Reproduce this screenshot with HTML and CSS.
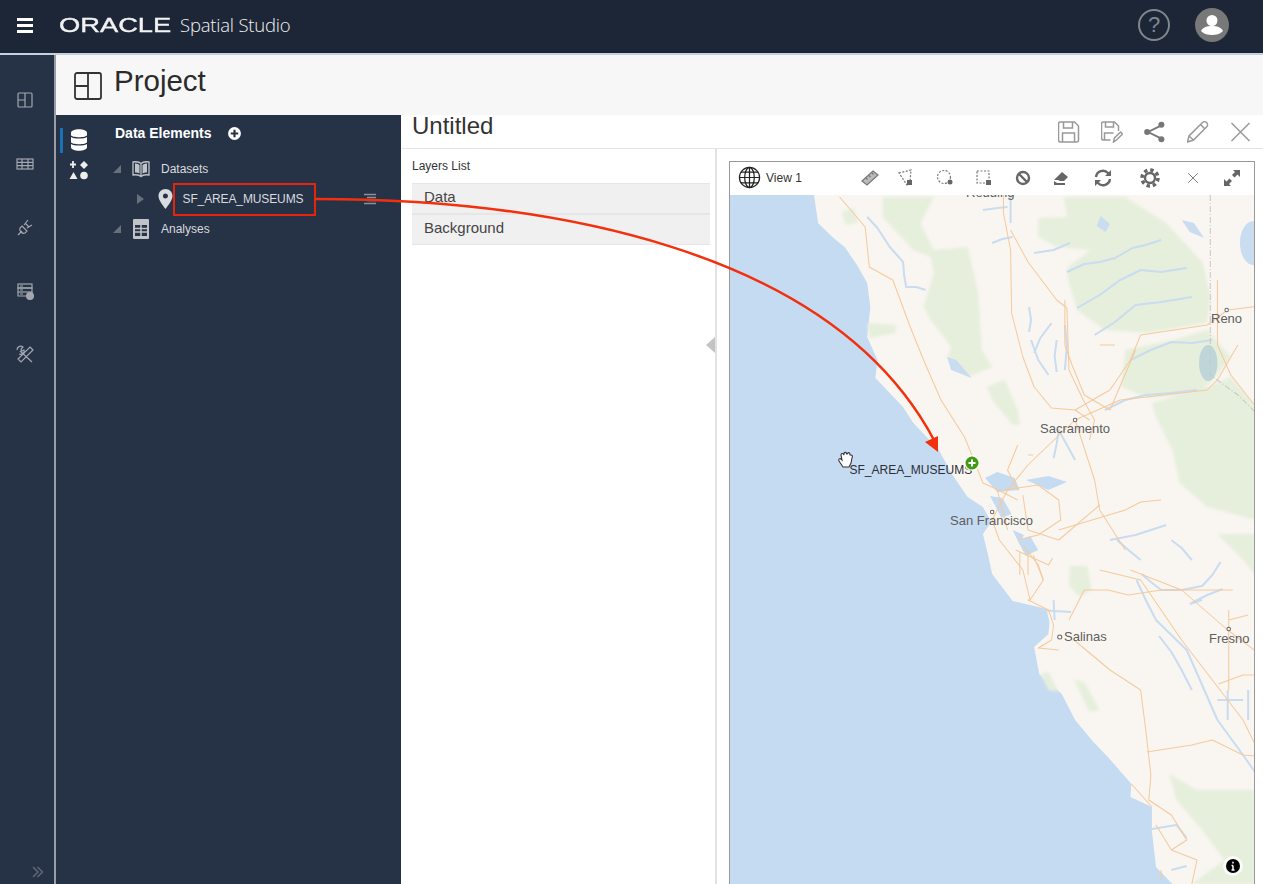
FILE: index.html
```html
<!DOCTYPE html>
<html lang="en">
<head>
    <meta charset="UTF-8">
    <title>Oracle Spatial Studio</title>
    <link rel="stylesheet" href="styles.css">
</head>
<body>

<header class="topbar">
    <div class="hamburger"><span></span><span></span><span></span></div>
    <div class="brand">
        <span class="brand-oracle">ORACLE</span>
        <span class="brand-product">Spatial Studio</span>
    </div>
    <div class="help">?</div>
    <svg class="avatar" viewBox="0 0 34 34">
        <circle class="avatar-bg" cx="17" cy="17" r="17"/>
        <circle class="avatar-fg" cx="17" cy="12.500" r="5.500"/>
        <path class="avatar-fg" d="M6 23c2-4 6-5 11-5s9 1 11 5c-3 3-7 4-11 4s-8-1-11-4z"/>
    </svg>
</header>

<div class="shell">
    <nav class="rail">
        <svg class="rail-icon" viewBox="0 0 20 20"><rect x="3" y="3" width="14" height="14" rx="1"/><path d="M10 3v14M3 10h7"/></svg>
        <svg class="rail-icon" viewBox="0 0 20 20"><rect x="2" y="5" width="16" height="10"/><path d="M2 8.300h16M2 11.600h16M7 5v10M13 5v10"/></svg>
        <svg class="rail-icon" viewBox="0 0 20 20"><path d="M3 18l4-4M7 9l5 5-2 2c-2 1-3 0-4-1s-2-2-1-4zM10 6l4 4M9 8l4-5M12 11l5-3"/></svg>
        <svg class="rail-icon" viewBox="0 0 20 20"><rect x="3" y="3" width="14" height="4"/><rect x="3" y="7" width="14" height="4"/><path d="M3 11v4h8M17 11v1M5 5h3M5 9h3M5 13h3"/><circle class="rail-fill" cx="15" cy="15" r="3.400"/></svg>
        <svg class="rail-icon rail-icon-tools" viewBox="0 0 20 20"><path d="M5 7l12 11M15 3l3 3-12 12-3-3zM2 6c0-3 3-5 6-3L6 5l1 2 2-1c1 3-2 5-5 4"/></svg>
        <svg class="rail-more" viewBox="0 0 12 12"><path d="M1 1l5 5-5 5M5.500 1l5 5-5 5"/></svg>
    </nav>

    <main class="workspace">
        <div class="project-bar">
            <svg class="project-icon" viewBox="0 0 28 28"><rect x="1" y="1" width="26" height="26" rx="2"/><path d="M14 1v26M1 14h13"/></svg>
            <h1 class="project-title">Project</h1>
        </div>

        <div class="columns">
            <section class="panel">
                <div class="panel-tabs">
                    <svg class="tab-db" viewBox="0 0 16 22"><path d="M0 4c0-5 16-5 16 0v2c0 3-16 3-16 0zM0 8c3 2 13 2 16 0v5c0 3-16 3-16 0zM0 15c3 2 13 2 16 0v3c0 5-16 5-16 0z"/></svg>
                    <svg class="tab-tools" viewBox="0 0 20 20"><path d="M4 1v7M1 4.500h6"/><path class="tab-solid" d="M15 1l4 4-4 4-4-4zM4.500 12l4 7h-8z"/><circle class="tab-solid" cx="15" cy="15.500" r="3.800"/></svg>
                </div>
                <div class="tree">
                    <div class="tree-head">
                        <span>Data Elements</span>
                        <svg class="add-icon" viewBox="0 0 14 14"><circle cx="7" cy="7" r="7"/><path d="M7 3.500v7M3.500 7h7"/></svg>
                    </div>
                    <div class="tree-row">
                        <span class="caret-open"></span>
                        <svg class="tree-icon" viewBox="0 0 18 18"><path d="M9 3.500C7 1.500 4 1.500 1 2v13c3-.5 6-.5 8 1.500 2-2 5-2 8-1.500V2C14 1.500 11 1.500 9 3.500zM9 3.500v13"/><path class="tree-solid" d="M3 3.500c2 0 3 .5 4.500 1.500v8.500C6 12.500 5 12.500 3 12.500zM15 3.500c-2 0-3 .5-4.500 1.500v8.500c1.500-1 2.500-1 4.500-1z"/></svg>
                        <span class="tree-label">Datasets</span>
                    </div>
                    <div class="tree-row tree-row-child">
                        <span class="caret-closed"></span>
                        <svg class="pin-icon" viewBox="0 0 14 20"><path fill-rule="evenodd" d="M7 0c4 0 7 3 7 7 0 4-4 9-7 13-3-4-7-9-7-13 0-4 3-7 7-7zm0 4.500a2.500 2.500 0 1 0 0 5 2.500 2.500 0 0 0 0-5z"/></svg>
                        <span class="dataset-name">SF_AREA_MUSEUMS</span>
                        <svg class="row-menu" viewBox="0 0 14 12"><path d="M1 1.500h12M4 4.500h9M4 7.500h9M1 10.500h12"/></svg>
                    </div>
                    <div class="tree-row">
                        <span class="caret-open"></span>
                        <svg class="tree-icon" viewBox="0 0 18 20"><rect class="tree-solid" x="1" y="0" width="16" height="20" rx="1"/><rect class="tree-cut" x="3" y="6" width="12" height="11"/><path class="tree-solid-line" d="M3 9.500h12M3 13h12M9 6v11"/></svg>
                        <span class="tree-label">Analyses</span>
                    </div>
                </div>
            </section>

            <section class="content">
                <div class="title-bar">
                    <h2 class="doc-title">Untitled</h2>
                    <div class="doc-tools">
                        <svg class="doc-icon" viewBox="0 0 22 22"><path d="M1 3a2 2 0 0 1 2-2h14l4 4v14a2 2 0 0 1-2 2H3a2 2 0 0 1-2-2zM6 1v6h9V1M5 21v-9h12v9"/></svg>
                        <svg class="doc-icon" viewBox="0 0 22 22"><path d="M10 19H3a2 2 0 0 1-2-2V3a2 2 0 0 1 2-2h11l4 4v5M5 1v5h8V1M4 19v-7h9"/><path d="M13 21l1-4 6-6 2 2-6 6z"/></svg>
                        <svg class="doc-icon doc-icon-share" viewBox="0 0 24 24"><path class="share-line" d="M19 5L5 12l14 7"/><circle cx="19.500" cy="4" r="3.300"/><circle cx="4" cy="12" r="3.300"/><circle cx="19.500" cy="20" r="3.300"/></svg>
                        <svg class="doc-icon" viewBox="0 0 22 22"><path d="M1 21l1.500-6L16 1.500c1-1 3-1 4 0s1.500 3 .5 4L7 19zM2.500 15L7 19M14 3.500l4.500 4.500"/></svg>
                        <svg class="doc-icon" viewBox="0 0 22 22"><path d="M2 2l18 18M20 2L2 20"/></svg>
                    </div>
                </div>

                <div class="work-area">
                    <div class="layers">
                        <div class="layers-title">Layers List</div>
                        <div class="accordion">Data</div>
                        <div class="accordion">Background</div>
                        <span class="collapse-handle"></span>
                    </div>

                    <div class="map-pane">
                        <div class="map-frame">
                            <span class="map-corner"></span>
                            <div class="map-toolbar">
                                <svg class="globe" viewBox="0 0 24 24"><circle cx="12" cy="12" r="10.500"/><ellipse cx="12" cy="12" rx="5" ry="10.500"/><path d="M12 1.500v21M1.500 12h21M3 6.500h18M3 17.500h18"/></svg>
                                <span class="view-name">View 1</span>
                                <div class="tools">
                                    <span class="tool tool-first"><svg viewBox="0 0 20 20"><path class="ruler" d="M2 13L13 3l5 4-11 10z"/><path d="M6 10l1.500 1.500M9 7.500l1.500 1.500M12 5l1.500 1.500"/></svg></span>
                                    <span class="tool"><svg viewBox="0 0 20 20"><path class="dash" d="M3 5l12-3-1 12-3 3z"/><rect class="solid" x="11" y="12" width="5" height="5"/></svg></span>
                                    <span class="tool"><svg viewBox="0 0 20 20"><circle class="dash" cx="9" cy="9" r="6.500"/><circle class="solid" cx="15" cy="14" r="2.500"/></svg></span>
                                    <span class="tool"><svg viewBox="0 0 20 20"><rect class="dash" x="3" y="3" width="12" height="12"/><rect class="solid" x="12" y="12" width="5" height="5"/></svg></span>
                                    <span class="tool"><svg viewBox="0 0 20 20"><circle class="heavy" cx="10" cy="10" r="6"/><path class="heavy" d="M6 6l8 8"/></svg></span>
                                    <span class="tool tool-tight"><svg viewBox="0 0 20 20"><path class="solid" d="M3 12l8-8 6 5-4 4H9l-2 -1z"/><path class="solid" d="M3 13l3 2h8v2H3z"/></svg></span>
                                    <span class="tool tool-wide"><svg viewBox="0 0 20 20"><path class="heavy" d="M3 9a7 7 0 0 1 12-4l2 2M17 11a7 7 0 0 1-12 4l-2-2"/><path class="solid" d="M18 2v6h-6zM2 18v-6h6z"/></svg></span>
                                    <span class="tool tool-wide"><svg viewBox="0 0 20 20"><circle class="heavy" cx="10" cy="10" r="5"/><circle class="gear-teeth" cx="10" cy="10" r="8"/></svg></span>
                                    <span class="tool"><svg class="tool-small" viewBox="0 0 20 20"><path d="M4 4l12 12M16 4L4 16"/></svg></span>
                                    <span class="tool"><svg viewBox="0 0 20 20"><path class="solid" d="M11 2h7v7l-2.500-2.500-3 3-2.500-2.500 3-3zM9 18H2v-7l2.500 2.500 3-3 2.500 2.500-3 3z"/></svg></span>
                                </div>
                            </div>

                            <svg class="map" viewBox="729 195 525 689">
                                <rect class="water" x="729" y="195" width="525" height="689"/>
                                <g class="geo" transform="translate(728 0) scale(1.024 1) translate(-728 0)">
                                    <path class="land" d="M811 195L815 223 830 238 841 247 853 265 863 283 866 307 863 337 873 360 871 378 898 407 908 423 933 450 945 473 961 497 976 507 984 522 976 534 981 555 985 574 1005 601 1018 604 1038 609 1041 622 1040 634 1026 647 1031 674 1053 694 1066 720 1083 741 1098 757 1121 784 1120 797 1141 807 1141 831 1145 867 1161 884H1254V195z"/>

                                    <g class="greens">
                                        <path d="M1030 218L1058 217 1055 197H1115L1155 223 1191 263 1198 297 1195 323 1135 333 1095 330 1068 310 1060 283 1058 268 1081 250 1048 247 1030 237z"/>
                                        <path d="M1115 350L1161 340 1195 330 1218 357 1201 380 1185 393 1138 398 1111 387z"/>
                                        <path d="M1141 403L1195 387 1218 377 1243 407 1254 420V523L1195 507 1168 483 1161 450 1145 417z"/>
                                        <path d="M878 197H928L915 223 928 250 961 247 971 290 975 350 985 367 961 377 941 357 945 347 925 320 918 307 928 273 925 257 908 250 878 217z"/>
                                        <path d="M838 212L850 208 854 222 842 225zM863 323L891 325 891 333 865 338zM980 387L997 380 1010 410 1012 425 1005 425 985 400zM1061 566L1078 566 1082 590 1070 597 1060 585zM1205 534H1254V590L1230 560zM1158 774L1185 790 1243 790 1254 800V884H1180L1212 860 1190 830 1165 800zM1032 674L1040 672 1050 692 1040 690zM1065 680L1075 682 1090 710 1080 712z"/>
                                    </g>

                                    <g class="river">
                                        <path d="M863 217L873 228 885 247 892 255 898 262 899 275 901 287 911 287 920 290"/>
                                        <path d="M976 210L990 208 1000 207M1005 237L995 239 985 243M1026 253L1045 250 1061 243M1003 195V223"/>
                                        <path d="M1058 272L1075 264 1090 262 1105 258 1122 248 1135 245 1150 240M1068 308L1090 295 1110 280 1130 270 1150 272 1175 268"/>
                                        <path d="M1085 335L1105 322 1125 305 1150 302 1180 297M1120 360L1140 350 1160 342 1180 343 1200 340"/>
                                        <path d="M1021 307L1023 320 1021 332M1026 353L1032 338 1043 323M1048 372L1046 356 1048 340M1056 370L1058 345 1056 325M1023 340L1030 360 1040 375"/>
                                        <path d="M1045 458L1048 444 1050 430 1058 445 1066 460M1095 410L1115 400 1135 395 1160 393 1185 390"/>
                                        <path d="M1131 574L1140 582 1150 590 1170 590 1190 586 1200 575 1208 562M1160 540L1170 548 1180 560M1178 604L1190 600M1210 589L1195 595 1178 604"/>
                                        <path d="M1148 636L1160 652 1170 670 1180 690M1126 580L1135 600 1145 620 1160 635 1175 650 1190 685 1205 720 1230 755 1254 790"/>
                                        <path d="M1205 700L1230 700M1215 690V720M1235 690V720"/>
                                        <path d="M1045 600L1046 620M1030 610L1062 612"/>
                                        <path d="M1107 540L1118 550 1130 560M1100 540L1125 535 1155 525"/>
                                        <path d="M1141 829L1165 825 1175 838M1160 870L1175 866"/>
                                    </g>
                                    <path class="lake" d="M1170 220L1182 223 1192 238 1178 232zM941 357L950 360 965 378 945 370zM1091 216L1100 224 1096 232 1087 226z"/>
                                    <ellipse class="lake" cx="1240" cy="243" rx="13" ry="22"/>
                                    <ellipse class="tahoe" cx="1196" cy="363" rx="9" ry="18"/>
                                    <path class="water" d="M978 478L990 472 1007 478 1012 490 990 492zM1018 480L1040 476 1058 482 1040 490zM983 496L995 498 1004 514 994 518zM1010 541L1022 536 1030 550 1018 556zM1005 530L1016 535 1012 545z"/>

                                    <g class="road">
                                        <path d="M996 195V213L1003 250 1004 313 1015 357 1026 387 1043 408 1066 410 1080 420"/>
                                        <path d="M836 197L861 227 865 267 888 280 905 327 918 360 935 400 958 437 971 470 976 483 991 490 1010 500"/>
                                        <path d="M1003 230L1020 262 1048 300 1058 308 1060 370 1074 400 1085 420 1080 440"/>
                                        <path d="M1056 300V345L1063 365 1075 395 1100 410 1125 350"/>
                                        <path d="M1066 410L1100 390 1120 360 1130 335 1195 325 1215 310 1254 305"/>
                                        <path d="M1066 420L1110 400 1195 390 1205 380 1218 357 1225 345"/>
                                        <path d="M1205 280V345L1218 375 1245 410 1254 440"/>
                                        <path d="M1066 420L1030 455 1020 465 1000 490 985 520 992 540 1015 570 1022 600M1066 420L1085 480 1090 510 1115 550"/>
                                        <path d="M996 490L1030 485 1050 500 1052 520 1030 535 1010 540M990 490L1000 530M1015 495L1020 530 1050 540 1090 505"/>
                                        <path d="M1010 445L1000 470 1010 490M1025 455H1020M1090 345H1105"/>
                                        <path d="M1115 510L1050 530M1115 510L1130 502 1150 500"/>
                                        <path d="M1015 545L1030 565 1035 580 1022 600 1020 600 1040 610 1045 625 1043 640 1030 648 1050 650"/>
                                        <path d="M1060 620L1075 590 1098 590 1118 595 1150 590 1220 590"/>
                                        <path d="M1090 570L1130 580 1170 640 1230 720 1254 770"/>
                                        <path d="M1120 570L1170 590 1215 630 1254 660"/>
                                        <path d="M1065 640L1100 670 1130 690 1135 730 1140 775 1138 800 1160 815 1175 840 1160 850 1185 860 1180 884"/>
                                        <path d="M1136 752L1180 745 1200 740 1230 755 1254 757"/>
                                        <path d="M1216 610V690M1206 684L1230 675 1254 675M1216 620L1235 615"/>
                                        <path d="M1025 555L1035 580M1008 550L1040 565 1044 558M1012 552V575M1020 552V575"/>
                                        <path d="M1121 784L1141 807M1145 825L1160 850M1150 870V880"/>
                                    </g>
                                    <path class="border-line" d="M1198 195V375L1225 395 1250 420"/>

                                    <circle class="city" cx="1214" cy="310" r="1.700"/>
                                    <circle class="city" cx="1066" cy="420" r="1.700"/>
                                    <circle class="city" cx="985" cy="512" r="1.700"/>
                                    <circle class="city" cx="1051" cy="637" r="2"/>
                                    <circle class="city" cx="1216" cy="629" r="1.700"/>
                                </g>
                                <text class="city-label" x="965" y="197">Redding</text>
                                <text class="city-label" x="1210" y="323">Reno</text>
                                <text class="city-label" x="1039" y="433">Sacramento</text>
                                <text class="city-label" x="949" y="525">San Francisco</text>
                                <text class="city-label" x="1063" y="641">Salinas</text>
                                <text class="city-label" x="1208" y="643">Fresno</text>

                                <text class="ghost-label" x="848.500" y="474">SF_AREA_MUSEUMS</text>
                                <circle class="plus-halo" cx="971" cy="463" r="8"/>
                                <circle class="plus-disc" cx="971" cy="463" r="6.500"/>
                                <path class="plus-mark" d="M971 459.500v7M967.500 463h7"/>
                                <path class="hand" d="M842 467L838 461C837 459 839 458 840 459L841 460 840 455C840 453 842 453 843 455L843 453C844 452 845 452 846 454L847 453C848 452 849 453 849 455L850 455C851 455 852 456 851 458L850 463 848 467z"/>

                                <circle class="info-halo" cx="1232" cy="866" r="10"/>
                                <circle class="info-disc" cx="1232" cy="866" r="7"/>
                                <path class="info-mark" d="M1232 865.500v4.500M1230.500 865.500h1.500M1230.500 870h3M1232 861.800v1.700"/>
                            </svg>
                        </div>
                    </div>
                </div>
            </section>
        </div>
    </main>
</div>

<svg class="arrow-layer" viewBox="0 0 1263 884">
    <path class="arrow-line" d="M315 199C540 199 830 245 934 440"/>
    <path class="arrow-head" d="M925 442L938 436 938 452z"/>
</svg>

</body>
</html>
```

FILE: styles.css
```css
html, body
{
    margin: 0;
    height: 100%;
    overflow: hidden;
}

body
{
    position: relative;
    display: flex;
    flex-direction: column;
    width: 1263px;
    height: 884px;
    font-family: "Liberation Sans", Arial, sans-serif;
    color: #333;
    background: #fff;
}

h1, h2
{
    margin: 0;
    font-weight: normal;
}

svg
{
    display: block;
    flex: none;
}

/* top bar */

.topbar
{
    display: flex;
    align-items: center;
    flex: none;
    box-sizing: border-box;
    height: 55px;
    padding: 0 34px 3px 17px;
    background: #1c2636;
    border-bottom: 2px solid #c3d2dc;
}

.hamburger
{
    display: flex;
    flex-direction: column;
    gap: 3px;
    width: 16px;
}

.hamburger span
{
    height: 3px;
    background: #fff;
}

.brand
{
    display: flex;
    align-items: center;
    margin-left: 26px;
    color: #f2f2f2;
}

.brand-oracle
{
    display: inline-block;
    width: 113px;
    font-size: 21px;
    line-height: 24px;
    -webkit-text-stroke: 0.4px #f2f2f2;
    transform: scaleX(1.3);
    transform-origin: left center;
}

.brand-product
{
    margin-left: 8px;
    font-family: "Open Sans", sans-serif;
    font-size: 18.500px;
    font-weight: 300;
    line-height: 24px;
    letter-spacing: -0.2px;
}

.help
{
    box-sizing: border-box;
    width: 32px;
    height: 32px;
    margin-left: auto;
    border: 2px solid #82878f;
    border-radius: 50%;
    color: #82878f;
    font-size: 22px;
    line-height: 28px;
    text-align: center;
}

.avatar
{
    width: 34px;
    height: 34px;
    margin-left: 25px;
}

.avatar-bg
{
    fill: #787878;
}

.avatar-fg
{
    fill: #fff;
}

/* shell */

.shell
{
    display: flex;
    flex: 1;
    min-height: 0;
}

.rail
{
    display: flex;
    flex-direction: column;
    align-items: flex-start;
    flex: none;
    box-sizing: border-box;
    width: 56px;
    padding: 35px 0 6px 15px;
    background: #263245;
    border-right: 2px solid #9a9ca6;
}

.rail-icon
{
    width: 20px;
    height: 20px;
    margin-bottom: 43.500px;
    fill: none;
    stroke: #a2a7af;
    stroke-width: 1.200;
}

.rail-fill
{
    fill: #a2a7af;
}

.rail-more
{
    width: 12px;
    height: 12px;
    margin: auto 0 0 17px;
    fill: none;
    stroke: #5f6875;
    stroke-width: 1.500;
}

.workspace
{
    display: flex;
    flex-direction: column;
    flex: 1;
    min-width: 0;
}

.project-bar
{
    display: flex;
    align-items: center;
    gap: 12px;
    flex: none;
    box-sizing: border-box;
    height: 60px;
    padding: 0 0 0 18px;
    background: #f7f7f7;
}

.project-icon
{
    width: 28px;
    height: 28px;
    margin-top: 1px;
    fill: none;
    stroke: #333;
    stroke-width: 1.800;
}

.project-title
{
    font-size: 29.500px;
    line-height: 34px;
    color: #2b2b2b;
    margin-top: -8px;
}

.columns
{
    display: flex;
    flex: 1;
    min-height: 0;
}

/* data elements panel */

.panel
{
    display: flex;
    flex: none;
    width: 345px;
    background: #263245;
}

.panel-tabs
{
    display: flex;
    flex-direction: column;
    align-items: flex-start;
    gap: 7px;
    box-sizing: border-box;
    width: 49px;
    padding: 13px 0 0 4px;
}

.tab-db
{
    box-sizing: content-box;
    width: 16px;
    height: 22px;
    padding: 1px 0 2px 8px;
    fill: #fff;
    border-left: 3px solid #1a6fb5;
}

.tab-tools
{
    width: 20px;
    height: 20px;
    margin-left: 9px;
    fill: none;
    stroke: #eee;
    stroke-width: 1.800;
}

.tab-solid
{
    fill: #eee;
    stroke: none;
}

.tree
{
    flex: 1;
    padding: 10px 0 0 8px;
}

.tree-head
{
    display: flex;
    align-items: center;
    height: 16px;
    padding: 0 0 0 2px;
    font-size: 14px;
    font-weight: bold;
    color: #fff;
}

.add-icon
{
    width: 15px;
    height: 15px;
    margin-left: 16px;
    fill: #fff;
    stroke: #263245;
    stroke-width: 2;
}

.tree-row
{
    display: flex;
    align-items: center;
    height: 30px;
    font-size: 12px;
    color: #d8dbdf;
}

.tree-head + .tree-row
{
    margin-top: 13px;
}

.tree-row-child
{
    padding-left: 24px;
}

.caret-open
{
    width: 0;
    height: 0;
    margin-right: 11px;
    border-style: solid;
    border-width: 0 0 8px 8px;
    border-color: transparent transparent #68707b transparent;
}

.caret-closed
{
    width: 0;
    height: 0;
    margin-right: 14px;
    border-style: solid;
    border-width: 5px 0 5px 7px;
    border-color: transparent transparent transparent #68707b;
}

.tree-icon
{
    width: 18px;
    height: 20px;
    margin-right: 11px;
    fill: none;
    stroke: #c0c3c8;
    stroke-width: 1.300;
}

.tree-solid
{
    fill: #c0c3c8;
    stroke: none;
}

.tree-cut
{
    fill: #263245;
    stroke: none;
}

.tree-solid-line
{
    stroke: #c0c3c8;
    stroke-width: 1.500;
}

.pin-icon
{
    width: 15px;
    height: 20px;
    fill: #d8dbdf;
}

.dataset-name
{
    box-sizing: border-box;
    width: 143px;
    height: 33px;
    padding-left: 7.500px;
    border: 2.500px solid #e8230c;
    line-height: 28px;
    letter-spacing: -0.010em;
}

.row-menu
{
    width: 14px;
    height: 12px;
    margin-left: 47px;
    fill: none;
    stroke: #8b9098;
    stroke-width: 1.300;
}

/* main content */

.content
{
    display: flex;
    flex-direction: column;
    flex: 1;
    min-width: 0;
    margin-left: 1px;
    background: #fff;
}

.title-bar
{
    display: flex;
    align-items: center;
    flex: none;
    box-sizing: border-box;
    height: 34px;
    padding: 0 1px 0 10px;
    border-bottom: 1.500px solid #e4e4e4;
}

.doc-title
{
    margin-top: -12px;
    font-size: 24px;
    line-height: 28px;
    color: #333;
}

.doc-tools
{
    display: flex;
    align-items: center;
    margin: 0 0 0 auto;
}

.doc-icon
{
    box-sizing: content-box;
    width: 22px;
    height: 22px;
    padding: 0 10.500px;
    fill: none;
    stroke: #999;
    stroke-width: 1.500;
}

.doc-icon-share
{
    fill: #777;
    stroke: none;
}

.share-line
{
    fill: none;
    stroke: #777;
    stroke-width: 2;
}

.work-area
{
    display: flex;
    flex: 1;
    min-height: 0;
}

.layers
{
    position: relative;
    flex: none;
    box-sizing: border-box;
    width: 315px;
    padding: 10px 5px 0 10px;
    border-right: 2px solid #e2e2e2;
}

.layers-title
{
    margin-bottom: 10px;
    font-size: 12px;
    line-height: 14px;
    color: #333;
}

.accordion
{
    box-sizing: border-box;
    height: 31px;
    padding-left: 12px;
    background: #f0f0f0;
    border-top: 1px solid #e6e6e6;
    border-bottom: 1px solid #e6e6e6;
    font-size: 15px;
    line-height: 26px;
    color: #444;
}

.collapse-handle
{
    position: absolute;
    top: 188px;
    right: 0;
    width: 0;
    height: 0;
    border-style: solid;
    border-width: 8px 9px 8px 0;
    border-color: transparent #c4c4c4 transparent transparent;
}

/* map */

.map-pane
{
    flex: 1;
    min-width: 0;
    padding: 12px 8px 0 12px;
}

.map-frame
{
    position: relative;
    box-sizing: border-box;
    width: 526px;
    height: 100%;
    border: 1px solid #999;
    border-bottom: none;
    overflow: hidden;
}

.map-corner
{
    position: absolute;
    top: 0;
    left: 0;
    width: 0;
    height: 0;
    border-style: solid;
    border-width: 20px 20px 0 0;
    border-color: #2d8df0 transparent transparent transparent;
}

.map-toolbar
{
    position: relative;
    display: flex;
    align-items: center;
    box-sizing: border-box;
    height: 33px;
    padding: 0 3px 2px 8px;
    background: #fff;
}

.globe
{
    width: 23px;
    height: 23px;
    fill: none;
    stroke: #222;
    stroke-width: 1.300;
}

.view-name
{
    margin-left: 5px;
    font-size: 12px;
    color: #333;
}

.tools
{
    display: flex;
    align-items: center;
    margin-left: auto;
}

.tool
{
    display: flex;
    justify-content: center;
    width: 39px;
}

.tool-first
{
    width: 33px;
}

.tool-tight
{
    width: 37px;
}

.tool-wide
{
    width: 47px;
}

.tool svg
{
    width: 20px;
    height: 20px;
    fill: none;
    stroke: #777;
    stroke-width: 1.200;
}

.tool .tool-small
{
    width: 16px;
    height: 16px;
    margin: 2px 0;
}

.tool .ruler
{
    fill: #bbb;
}

.tool .dash
{
    stroke-dasharray: 2 1.500;
}

.tool .solid
{
    fill: #666;
    stroke: none;
}

.tool .heavy
{
    stroke: #666;
    stroke-width: 2.400;
}

.tool .gear-teeth
{
    stroke: #666;
    stroke-width: 3.500;
    stroke-dasharray: 3.400 2.880;
}

.map
{
    width: 525px;
    height: 689px;
}

.geo
{
    filter: blur(0.4px);
}

.water
{
    fill: #c5dbf2;
}

.land
{
    fill: #f9f6f1;
}

.greens
{
    fill: #e6eedc;
    filter: blur(1.500px);
}

.river
{
    fill: none;
    stroke: #c9dcf0;
    stroke-width: 2;
    stroke-linejoin: round;
}

.lake
{
    fill: #c9dcf0;
}

.tahoe
{
    fill: #bfd6d8;
}

.road
{
    fill: none;
    stroke: #f6c99c;
    stroke-width: 1;
    stroke-linejoin: round;
}

.border-line
{
    fill: none;
    stroke: #c8c8c8;
    stroke-width: 1;
    stroke-dasharray: 6 2 1 2;
}

.city
{
    fill: #fff;
    stroke: #666;
    stroke-width: 1;
}

.city-label
{
    font-size: 13px;
    fill: #5e5e5e;
}

.ghost-label
{
    font-size: 12px;
    fill: #2a2f36;
}

.plus-halo, .info-halo
{
    fill: #fff;
    opacity: 0.8;
}

.plus-disc
{
    fill: #3f9c12;
}

.plus-mark
{
    fill: none;
    stroke: #fff;
    stroke-width: 2;
}

.hand
{
    fill: #fff;
    stroke: #333;
    stroke-width: 1.100;
}

.info-disc
{
    fill: #000;
}

.info-mark
{
    fill: none;
    stroke: #fff;
    stroke-width: 1.500;
}

/* annotation arrow drawn on the screenshot */

.arrow-layer
{
    position: absolute;
    top: 0;
    left: 0;
    width: 1263px;
    height: 884px;
    pointer-events: none;
}

.arrow-line
{
    fill: none;
    stroke: #f3300d;
    stroke-width: 2.500;
}

.arrow-head
{
    fill: #f3300d;
}
```
